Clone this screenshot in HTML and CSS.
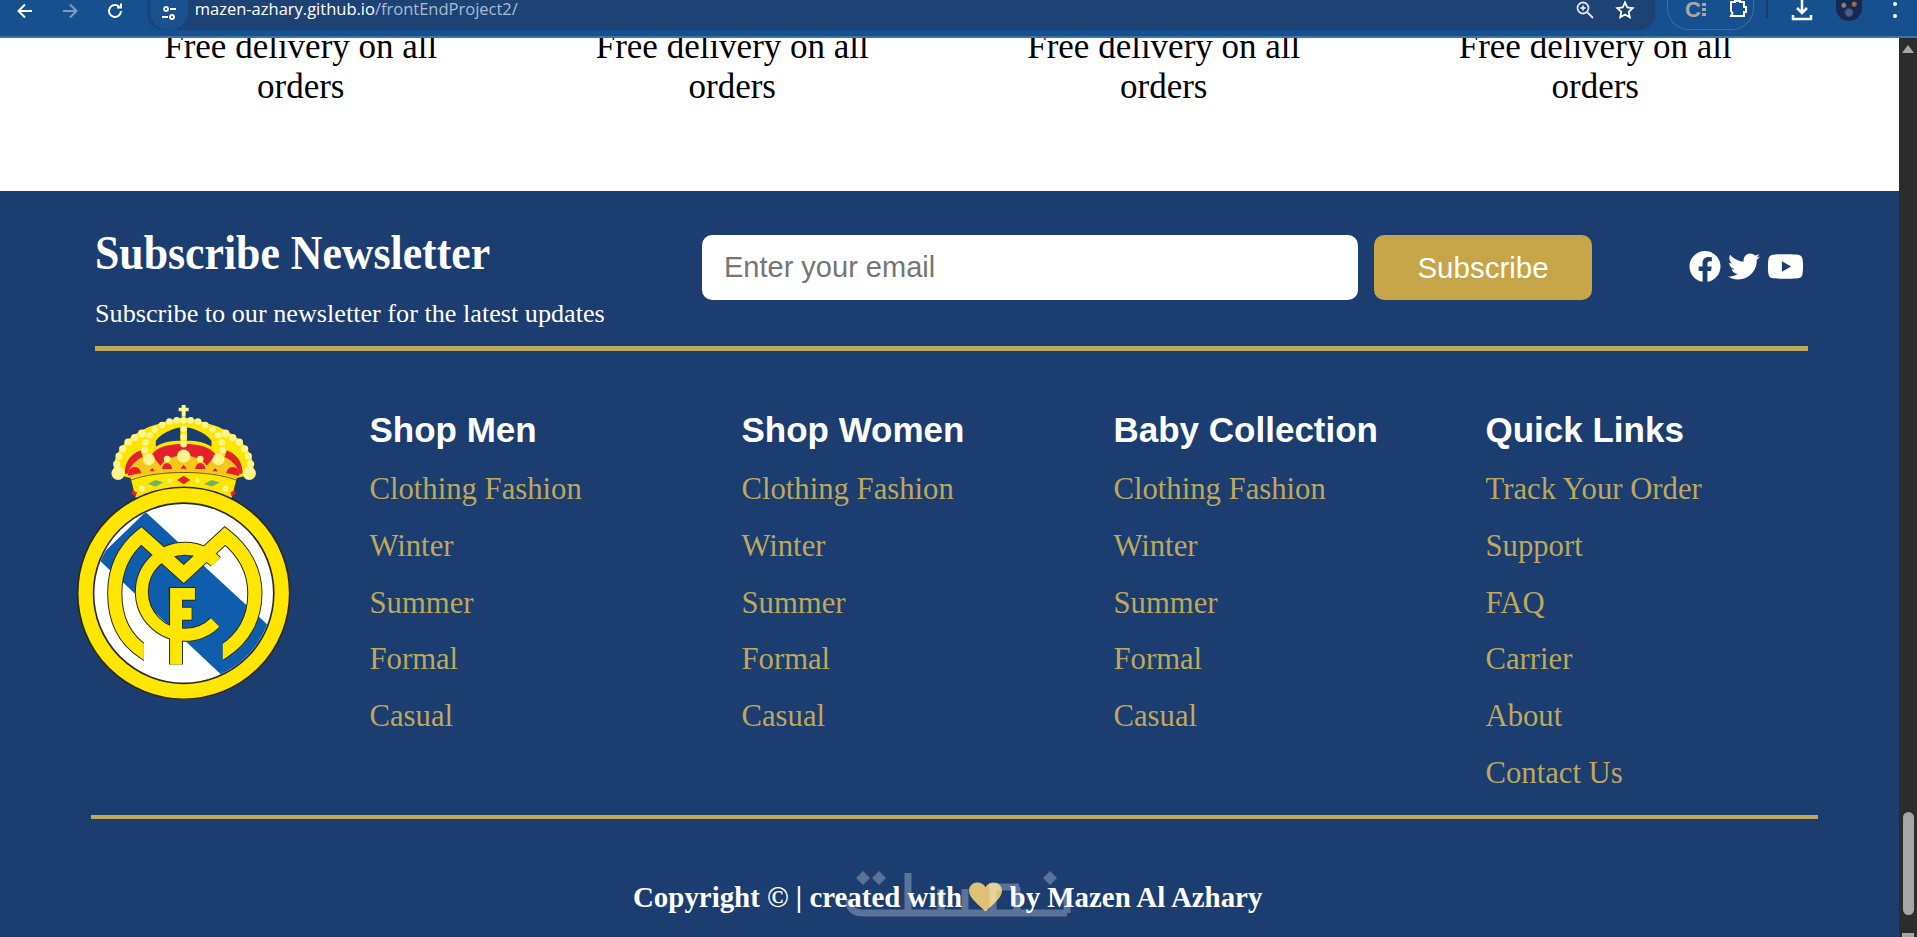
FILE: index.html
```html
<!DOCTYPE html>
<html lang="en">
<head>
<meta charset="utf-8">
<title>frontEndProject2</title>
<link rel="stylesheet" href="styles.css">
</head>
<body>
<header class="browser-bar">
  <nav class="nav-icons">
    <svg class="nav-icon" viewBox="0 0 20 20"><path d="M17 10H4M10 3.5 3.5 10l6.5 6.5"/></svg>
    <svg class="nav-icon dim" viewBox="0 0 20 20"><path d="M3 10h13M10 3.5l6.500 6.500-6.500 6.500"/></svg>
    <svg class="nav-icon" viewBox="0 0 20 20"><path d="M16 10a6 6 0 1 1-1.800-4.300M16 2.500v4h-4"/></svg>
  </nav>
  <div class="address">
    <span class="site-icon"><svg viewBox="0 0 20 20"><circle cx="7" cy="6" r="2"/><path d="M11 6h6M3 14h6"/><circle cx="13" cy="14" r="2"/></svg></span>
    <span class="url">mazen-azhary.github.io<span class="url-path">/frontEndProject2/</span></span>
    <svg class="addr-icon" viewBox="0 0 20 20"><circle cx="8" cy="8" r="5.500"/><path d="M12 12l6 6M8 5.500v5M5.500 8h5"/></svg>
    <svg class="addr-icon star" viewBox="0 0 20 20"><path d="M10 2.500l2.300 5 5.400.600-4 3.700 1.100 5.400-4.800-2.700-4.800 2.700 1.100-5.400-4-3.700 5.400-.600z"/></svg>
  </div>
  <div class="ext-pill">
    <span class="ext-c">C<i></i></span>
    <svg class="puzzle" viewBox="0 0 20 20"><path d="M3 2h4v-1h5v1h4v5h2v5h-2v4H3l1.500-3L3 11z"/></svg>
  </div>
  <span class="divider"></span>
  <svg class="download" viewBox="0 0 22 22"><path d="M11 0v12M6 8l5 5 5-5M2 15v4h18v-4"/></svg>
  <span class="avatar"></span>
  <span class="menu-dots"><i></i><i></i></span>
</header>

<div class="viewport">
  <main class="page">
    <section class="features">
      <p class="feature">Free delivery on all orders</p>
      <p class="feature">Free delivery on all orders</p>
      <p class="feature">Free delivery on all orders</p>
      <p class="feature">Free delivery on all orders</p>
    </section>

    <footer class="footer">
      <div class="newsletter">
        <div class="news-text">
          <h2>Subscribe Newsletter</h2>
          <p>Subscribe to our newsletter for the latest updates</p>
        </div>
        <form class="news-form">
          <input type="email" placeholder="Enter your email">
          <button type="button">Subscribe</button>
        </form>
        <div class="socials">
          <svg class="fb" viewBox="0 0 512 512"><path d="M504 256C504 119 393 8 256 8S8 119 8 256c0 123.780 90.690 226.380 209.250 245V327.690h-63V256h63v-54.640c0-62.150 37-96.480 93.670-96.480 27.140 0 55.520 4.840 55.520 4.840v61h-31.280c-30.800 0-40.410 19.120-40.410 38.730V256h68.780l-11 71.690h-57.780V501C413.310 482.380 504 379.780 504 256z"/></svg>
          <svg class="tw" viewBox="0 0 512 512"><path d="M459.370 151.716c.325 4.548.325 9.097.325 13.645 0 138.720-105.583 298.558-298.558 298.558-59.452 0-114.680-17.219-161.137-47.106 8.447.974 16.568 1.299 25.340 1.299 49.055 0 94.213-16.568 130.274-44.832-46.132-.975-84.792-31.188-98.112-72.772 6.498.974 12.995 1.624 19.818 1.624 9.421 0 18.843-1.300 27.614-3.573-48.081-9.747-84.143-51.980-84.143-102.985v-1.299c13.969 7.797 30.214 12.670 47.431 13.319-28.264-18.843-46.781-51.005-46.781-87.391 0-19.492 5.197-37.360 14.294-52.954 51.655 63.675 129.300 105.258 216.365 109.807-1.624-7.797-2.599-15.918-2.599-24.040 0-57.828 46.782-104.934 104.934-104.934 30.213 0 57.502 12.670 76.670 33.137 23.715-4.548 46.456-13.320 66.599-25.340-7.798 24.366-24.366 44.833-46.132 57.827 21.117-2.273 41.584-8.122 60.426-16.243-14.292 20.791-32.161 39.308-52.628 54.253z"/></svg>
          <svg class="yt" viewBox="0 0 576 512"><path d="M549.655 124.083c-6.281-23.650-24.787-42.276-48.284-48.597C458.781 64 288 64 288 64S117.220 64 74.629 75.486c-23.497 6.322-42.003 24.947-48.284 48.597-11.412 42.867-11.412 132.305-11.412 132.305s0 89.438 11.412 132.305c6.281 23.650 24.787 41.500 48.284 47.821C117.220 448 288 448 288 448s170.780 0 213.371-11.486c23.497-6.321 42.003-24.171 48.284-47.821 11.412-42.867 11.412-132.305 11.412-132.305s0-89.438-11.412-132.305zm-317.510 213.508V175.185l142.739 81.205-142.739 81.201z"/></svg>
        </div>
      </div>
      <hr class="rule rule-top">

      <div class="links-area">
        <svg class="crest" viewBox="78 40 646 888">
          <!-- crown -->
          <path class="c-gold" d="M190 250C180 180 245 120 320 100 350 88 380 82 400 80 420 82 450 88 480 100 555 120 620 180 610 250L560 262 545 322H255L240 262Z"/>
          <path class="c-red" d="M222 250C222 215 238 190 270 178L290 240ZM530 178C562 190 578 215 578 250L510 240ZM305 190C330 148 470 148 495 190L480 225H320Z"/>
          <path class="c-navy" d="M316 150C336 122 380 110 390 110V150C360 150 335 155 316 168ZM484 150C464 122 420 110 410 110V150C440 150 465 155 484 168Z"/>
          <path class="c-gold2" d="M232 244C250 205 280 195 295 195S320 215 330 225C345 205 365 195 400 195S455 205 470 225C480 215 490 195 505 195S550 205 568 244L560 262C480 240 320 240 240 262Z"/>
          <path class="c-red" d="M335 235a15 18 0 1 1 30 0ZM435 235a15 18 0 1 1 30 0ZM232 255a20 22 0 0 1 40-8ZM528 247a20 22 0 0 1 40 8ZM400 222l10 12h-20ZM305 232l8 10h-16ZM495 232l8 10h-16Z"/>
          <path class="c-dark-line" d="M242 268C320 238 480 238 558 268"/>
          <path class="c-red" d="M400 255l20 13-20 13-20-13ZM245 298l14 8-4 12-12-8ZM555 298l-14 8 4 12 12-8Z"/>
          <path class="c-green" d="M315 268l24 8-24 12-24-8ZM485 268l24 8-24 12-24-8Z"/>
          <g class="c-pearls">
            <path d="M394 42h12v8h9v11h-9v16h-12V61h-9V50h9Z"/>
            <circle cx="202" cy="248" r="20"/><circle cx="598" cy="248" r="20"/>
            <circle cx="295" cy="206" r="18"/><circle cx="505" cy="206" r="18"/>
            <circle cx="400" cy="196" r="20"/>
            <circle cx="198" cy="220" r="11"/><circle cx="602" cy="220" r="11"/>
            <circle cx="205" cy="196" r="11"/><circle cx="595" cy="196" r="11"/>
            <circle cx="216" cy="174" r="11"/><circle cx="584" cy="174" r="11"/>
            <circle cx="232" cy="154" r="11"/><circle cx="568" cy="154" r="11"/>
            <circle cx="252" cy="140" r="11"/><circle cx="548" cy="140" r="11"/>
            <circle cx="274" cy="128" r="12"/><circle cx="526" cy="128" r="12"/>
            <circle cx="285" cy="155" r="10"/><circle cx="515" cy="155" r="10"/>
            <circle cx="282" cy="178" r="10"/><circle cx="518" cy="178" r="10"/>
            <circle cx="297" cy="133" r="10"/><circle cx="503" cy="133" r="10"/>
            <circle cx="313" cy="116" r="10"/><circle cx="487" cy="116" r="10"/>
            <circle cx="335" cy="102" r="10"/><circle cx="465" cy="102" r="10"/>
            <circle cx="357" cy="92" r="10"/><circle cx="443" cy="92" r="10"/>
            <circle cx="379" cy="88" r="10"/><circle cx="421" cy="88" r="10"/>
            <circle cx="400" cy="88" r="10"/><circle cx="400" cy="114" r="10"/>
            <circle cx="400" cy="138" r="10"/><circle cx="400" cy="160" r="10"/>
            <circle cx="350" cy="205" r="10"/><circle cx="450" cy="205" r="10"/>
            <circle cx="358" cy="270" r="7"/><circle cx="442" cy="270" r="7"/>
            <circle cx="275" cy="294" r="9"/><circle cx="525" cy="294" r="9"/>
          </g>
          <!-- shield -->
          <circle class="c-ring" cx="400" cy="610" r="320"/>
          <circle class="c-field" cx="400" cy="610" r="272"/>
          <clipPath id="field-clip"><circle cx="400" cy="610" r="269"/></clipPath>
          <clipPath id="m-clip"><polygon points="0,0 810,0 810,960 518,960 518,700 280,700 280,960 0,960"/></clipPath>
          <polygon class="c-band" clip-path="url(#field-clip)" points="285,365 680,730 520,862 140,505"/>
          <!-- monogram -->
          <path class="m-under" d="M377 597V825M355 612H436M377 672H426"/>
          <path class="m-under" d="M497 515A130 130 0 1 0 495 698"/>
          <path class="m-under m-wide" clip-path="url(#m-clip)" d="M298 800 280 787C215 745 192 680 192 610C192 530 225 475 272 437L400 552L525 437C580 480 615 540 615 610C615 680 585 745 518 787L498 800"/>
          <path class="m-over" d="M377 597V825M359 612H434M377 672H424"/>
          <path class="m-over" d="M497 515A130 130 0 1 0 495 698"/>
          <path class="m-over m-wide" clip-path="url(#m-clip)" d="M298 800 280 787C215 745 192 680 192 610C192 530 225 475 272 437L400 552L525 437C580 480 615 540 615 610C615 680 585 745 518 787L498 800"/>
        </svg>

        <div class="link-cols">
          <div class="link-col">
            <h3>Shop Men</h3>
            <a>Clothing Fashion</a><a>Winter</a><a>Summer</a><a>Formal</a><a>Casual</a>
          </div>
          <div class="link-col">
            <h3>Shop Women</h3>
            <a>Clothing Fashion</a><a>Winter</a><a>Summer</a><a>Formal</a><a>Casual</a>
          </div>
          <div class="link-col">
            <h3>Baby Collection</h3>
            <a>Clothing Fashion</a><a>Winter</a><a>Summer</a><a>Formal</a><a>Casual</a>
          </div>
          <div class="link-col">
            <h3>Quick Links</h3>
            <a>Track Your Order</a><a>Support</a><a>FAQ</a><a>Carrier</a><a>About</a><a>Contact Us</a>
          </div>
        </div>
      </div>
      <hr class="rule rule-bottom">

      <p class="copyright">Copyright © | created with <svg class="heart" viewBox="0 0 34 30"><path d="M17 30C10 23 0 16 0 8.500 0 3.500 4 0 8.500 0 12 0 15.500 2 17 5 18.500 2 22 0 25.500 0 30 0 34 3.500 34 8.500 34 16 24 23 17 30Z"/></svg> by Mazen Al Azhary</p>

      <svg class="watermark" viewBox="0 0 230 50">
        <path class="wm-stroke" d="M4 30C4 42 10 44 20 44H222M63 4V44M96 20V44M120 20V44M144 18H174M148 18V44M172 18V44M222 20V44"/>
        <path class="wm-fill" d="M11 9l7-7 7 7-7 7ZM27 9l7-7 7 7-7 7ZM198 9l7-7 7 7-7 7Z"/>
      </svg>
    </footer>
  </main>

  <aside class="scrollbar">
    <span class="arrow-up"></span>
    <span class="thumb"></span>
    <span class="arrow-down"></span>
  </aside>
</div>
</body>
</html>
```

FILE: styles.css
```css
* { box-sizing: border-box; }
html, body { margin: 0; height: 937px; overflow: hidden; }
body { font-family: "Liberation Serif", "Times New Roman", serif; background: #fff; display: flex; flex-direction: column; }

/* browser chrome */
.browser-bar {
  height: 38px; flex: none; position: relative; z-index: 2;
  display: flex; align-items: flex-start;
  background: #16508f; border-bottom: 2px solid #3f74a3;
}
.nav-icons { display: flex; width: 147px; padding: 1px 0 0 15px; gap: 25px; }
.nav-icon { width: 20px; height: 20px; fill: none; stroke: #fff; stroke-width: 2; }
.nav-icon.dim { stroke: #7d9cc4; }
.address {
  width: 1508px; height: 30px; display: flex; align-items: flex-start;
  background: #1c4374; border-radius: 0 0 16px 16px;
}
.site-icon { width: 38px; height: 30px; margin-left: 3px; background: #1a518f; border-radius: 0 0 18px 18px; display: flex; justify-content: center; padding-top: 3px; }
.site-icon svg { width: 20px; height: 20px; fill: none; stroke: #fff; stroke-width: 1.8; }
.url { margin-left: 7px; font: 16.500px/18px "Open Sans", "Liberation Sans", sans-serif; color: #fff; letter-spacing: 0; width: 1410px; }
.url-path { color: #a9bdd8; }
.addr-icon { width: 20px; height: 20px; fill: none; stroke: #dce6f2; stroke-width: 1.800; margin-right: 20px; flex: none; }
.addr-icon.star { stroke: #fff; margin-right: 0; }
.addr-icon { position: relative; left: -20px; }
.ext-pill { width: 87px; height: 30px; margin-left: 12px; border: 1px solid #3a6ea8; border-top: 0; border-radius: 0 0 22px 22px; display: flex; gap: 23px; padding-left: 17px; }
.ext-c { font: bold 22px/20px "Liberation Sans", sans-serif; color: #a8a8a8; width: 20px; position: relative; }
.ext-c i { position: absolute; left: 17px; top: 2px; width: 4px; height: 14px; background: radial-gradient(circle, #a8a8a8 2px, transparent 2px) 0 0/4px 5px; }
.puzzle { width: 20px; height: 20px; fill: none; stroke: #fff; stroke-width: 2; }
.divider { width: 2px; height: 18px; margin-left: 12px; background: #1b3d6c; }
.download { width: 22px; height: 22px; margin-left: 23px; fill: none; stroke: #fff; stroke-width: 2.500; }
.avatar { width: 26px; height: 21px; margin-left: 23px; border-radius: 0 0 13px 13px;
  background:
    radial-gradient(circle at 30% 25%, #8a7f70 0 2px, transparent 3px),
    radial-gradient(circle at 70% 20%, #a06a50 0 2px, transparent 3px),
    radial-gradient(circle at 50% 60%, #4a5f88 0 3px, transparent 5px),
    #16294f; }
.menu-dots { margin-left: 31px; display: flex; flex-direction: column; gap: 8px; padding-top: 2px; }
.menu-dots i { width: 4px; height: 4px; border-radius: 50%; background: #fff; }

/* page */
.viewport { flex: 1; display: flex; min-height: 0; }
.page { flex: 1; min-width: 0; }
.features {
  display: grid; grid-template-columns: repeat(4, 431.500px);
  padding-left: 85px; margin-top: -11px; height: 164px;
}
.feature { width: 300px; margin: 0 auto; text-align: center; font-size: 35px; line-height: 39.500px; color: #000; }

/* footer */
.footer { position: relative; background: #1b3d70; height: 746px; color: #fff; }
.newsletter { display: flex; align-items: flex-start; height: 155px; padding-left: 95px; }
.news-text { width: 607px; padding-top: 36px; }
.news-text h2 { margin: 0; font-size: 48px; line-height: 52px; font-weight: 700; white-space: nowrap; transform: scaleX(.912); transform-origin: 0 50%; }
.news-text p { margin: 20px 0 0; font-size: 26.200px; line-height: 30px; white-space: nowrap; }
.news-form { display: flex; gap: 16px; margin-top: 44px; }
.news-form input { width: 656px; height: 65px; padding: 0 22px; border: 0; border-radius: 10px; background: #fff; font: 29px "Liberation Sans", sans-serif; }
.news-form input::placeholder { color: #757575; }
.news-form button { width: 218px; height: 65px; border: 0; border-radius: 10px; background: #c5a547; color: #fff; font: 29.500px "Liberation Sans", sans-serif; }
.socials { display: flex; align-items: center; gap: 7px; margin: 59px 0 0 97px; height: 33px; fill: #fff; }
.fb, .tw { width: 32px; height: 33px; }
.yt { width: 37px; height: 33px; }
.rule { border: 0; margin: 0; background: #bda85c; }
.rule-top { height: 5px; margin: 0 0 0 95px; width: 1713px; }
.links-area { display: flex; align-items: flex-start; height: 464px; padding: 53px 0 0 77px; }
.crest { width: 214px; height: 295px; flex: none; }
.link-cols { display: grid; grid-template-columns: repeat(4, 372px); margin-left: 78.500px; padding-top: 5px; }
.link-col { display: flex; flex-direction: column; }
.link-col h3 { margin: 0 0 10px; font: bold 35px/42px "Liberation Sans", sans-serif; color: #fff; }
.link-col a { font-size: 30.700px; line-height: 56.800px; color: #bda85c; }
.rule-bottom { height: 4px; margin: 0 0 0 91px; width: 1727px; }
.copyright { margin: 61px 0 0; padding-left: 633px; font-size: 28.900px; line-height: 34px; font-weight: 700; white-space: nowrap; }
.heart { width: 33px; height: 30px; vertical-align: -5px; fill: #dcc176; }
.watermark { position: absolute; left: 845px; top: 678px; width: 230px; height: 50px; opacity: .28; pointer-events: none; }
.wm-stroke { fill: none; stroke: #fff; stroke-width: 7; }
.wm-fill { fill: #fff; }

/* crest colours */
.c-gold { fill: #ffe600; }
.c-gold2 { fill: #f5c81a; }
.c-red { fill: #e3202c; }
.c-navy { fill: #1b3d70; }
.c-green { fill: #6fb36a; }
.c-dark-line { fill: none; stroke: #6b5c10; stroke-width: 3; }
.c-pearls { fill: #fff58c; }
.c-ring { fill: #ffe600; stroke: #2a2a1c; stroke-width: 5; }
.c-field { fill: #fff; stroke: #2a2a1c; stroke-width: 5; }
.c-band { fill: #0f5ead; }
.m-under, .m-over { fill: none; stroke-linejoin: miter; }
.m-under { stroke: #2a2a1c; stroke-width: 42; }
.m-under.m-wide { stroke-width: 46; }
.m-over { stroke: #ffe600; stroke-width: 36; }
.m-over.m-wide { stroke-width: 40; }

/* scrollbar */
.scrollbar { width: 18px; flex: none; background: #2c2c2c; display: flex; flex-direction: column; align-items: center; padding-top: 7px; }
.arrow-up { width: 0; height: 0; border: 6px solid transparent; border-top: 0; border-bottom: 8px solid #a6a6a6; }
.thumb { width: 11px; height: 105px; margin-top: 759px; background: #a6a6a6; border-radius: 6px; position: relative; left: .5px; }
.arrow-down { width: 12px; height: 4px; margin-top: 18px; background: #a6a6a6; }
```
